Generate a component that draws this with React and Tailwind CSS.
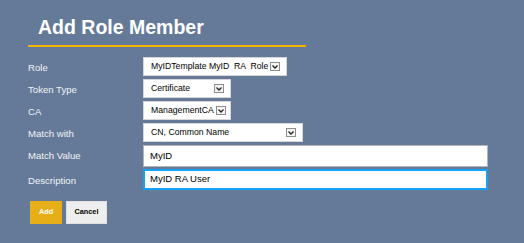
import React from 'react';

const Arrow = () => (
  <span className="ml-auto flex h-[9px] w-[10px] shrink-0 items-center justify-center border border-[#8d8d8d] bg-[#f4f4f4]">
    <svg width="6" height="4" viewBox="0 0 6 4">
      <path d="M0.5 0.5 L3 3 L5.5 0.5" fill="none" stroke="#222" strokeWidth="1.3" />
    </svg>
  </span>
);

function Select({ value, w }) {
  return (
    <div className={`flex h-[19px] items-center gap-[2px] border border-[#d6d6d6] bg-white pl-[7px] pr-[6px] ${w}`}>
      <span className="whitespace-pre text-[8.7px] text-black">{value}</span>
      <Arrow />
    </div>
  );
}

export default function App() {
  const labelCls = 'h-[19px] pt-[5px] text-[9.6px] leading-[12px] text-[#f2f4f7]';
  return (
    <div className="h-[243px] w-[524px] bg-[#657a98] font-['Liberation_Sans',Arial,sans-serif]">
      <div className="pl-[28px] pt-[16px]">
        <h1 className="pl-[10px] text-[19.5px] font-bold leading-[22px] text-white">Add Role Member</h1>
        <div className="mt-[7px] h-[2px] w-[278px] bg-[#f0b400]" />

        <div className="mt-[10px] grid grid-cols-[115px_1fr] gap-y-[3px]">
          <div className={labelCls}>Role</div>
          <Select value="MyIDTemplate MyID  RA  Role" w="w-[144px]" />

          <div className={labelCls}>Token Type</div>
          <Select value="Certificate" w="w-[88px]" />

          <div className={labelCls}>CA</div>
          <Select value="ManagementCA" w="w-[88px]" />

          <div className={labelCls}>Match with</div>
          <Select value="CN, Common Name" w="w-[160px]" />

          <div className={labelCls}>Match Value</div>
          <div className="flex h-[22px] w-[345px] items-center border border-[#b5b5b5] bg-white pl-[6px] text-[9.5px] text-black">MyID</div>

          <div className={labelCls}>Description</div>
          <div className="-mt-[1px] h-[21px] w-[345px] border-2 border-[#12a3f5] bg-white">
            <div className="flex h-full items-center pl-[5px] text-[9.5px] text-black">MyID RA User</div>
          </div>
        </div>

        <div className="mt-[11px] flex gap-[4px] pl-[2px]">
          <button className="h-[23px] w-[32px] bg-[#e8ae17] text-[7.3px] font-bold text-white">Add</button>
          <button className="h-[23px] w-[41px] border border-[#e0e0e0] bg-[#eeeeee] text-[7.3px] font-bold text-black">Cancel</button>
        </div>
      </div>
    </div>
  );
}
